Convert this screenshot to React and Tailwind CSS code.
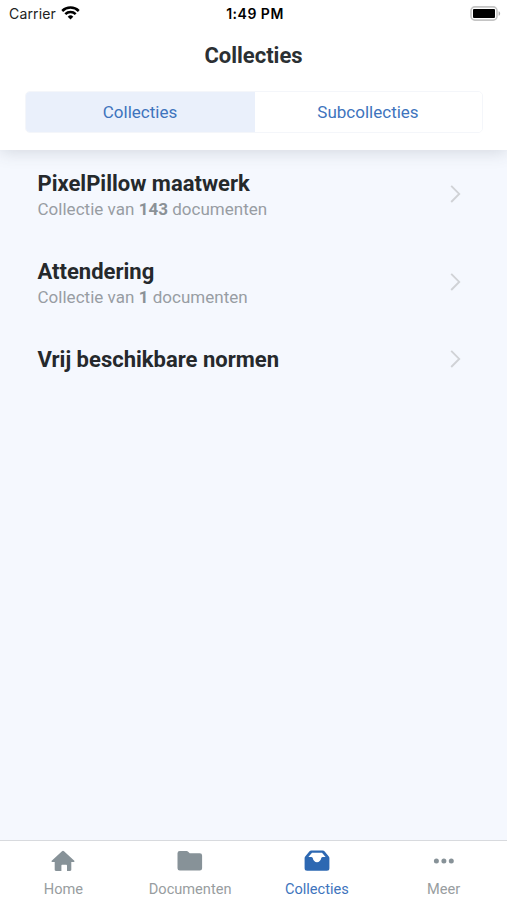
import { useState } from "react";

const HomeIcon = () => (
  <svg width="24" height="22" viewBox="0 0 24 22" fill="currentColor">
    <path d="M11 1.300a1.400 1.400 0 0 1 2 0l10.300 9.500c.5.5.2 1.200-.5 1.200H20.300v7.800c0 .7-.5 1.200-1.200 1.200h-3.100v-5.200c0-.6-.4-1-1-1h-3.600c-.6 0-1 .4-1 1V21H4.900c-.7 0-1.200-.5-1.200-1.200V12H1.200c-.7 0-1-.7-.5-1.200z" />
  </svg>
);

const FolderIcon = () => (
  <svg width="26" height="22" viewBox="0 0 26 22" fill="currentColor">
    <path d="M2.800 1h6.800c.5 0 .9.200 1.300.5l1.800 1.800h10.100a2.300 2.300 0 0 1 2.300 2.300v12.600a2.300 2.300 0 0 1-2.300 2.300h-20a2.300 2.300 0 0 1-2.300-2.300V3.300A2.300 2.300 0 0 1 2.800 1z" />
  </svg>
);

const InboxIcon = () => (
  <svg width="26" height="22" viewBox="0 0 26 22" fill="currentColor">
    <path
      fillRule="evenodd"
      d="M7.400.6h11.200c.9 0 1.600.3 2.100.9l4.100 5c.4.4.6.9.6 1.500v10.200a2.500 2.500 0 0 1-2.500 2.500H3.100a2.500 2.500 0 0 1-2.500-2.500V8c0-.6.2-1.100.6-1.500l4.100-5C5.800.9 6.500.6 7.400.6zM8 2.700 4.400 6.900h2.800c.8 0 1.300.4 1.500 1.100.5 2.500 2.200 4.300 4.300 4.300s3.800-1.800 4.300-4.300c.2-.7.700-1.100 1.500-1.100h2.800L18 2.700z"
    />
  </svg>
);

const DotsIcon = () => (
  <svg width="26" height="22" viewBox="0 0 26 22" fill="currentColor">
    <circle cx="5.400" cy="10.900" r="2.500" />
    <circle cx="12.900" cy="10.900" r="2.500" />
    <circle cx="20.300" cy="10.900" r="2.500" />
  </svg>
);

const WifiIcon = () => (
  <svg width="19" height="14" viewBox="0 0 19 14" fill="none" stroke="#000" strokeWidth="2.500">
    <path d="M1.200 5a11.800 11.800 0 0 1 16.600 0" />
    <path d="M4.300 8.200a7.400 7.400 0 0 1 10.400 0" />
    <path d="M6.700 10.700a4 4 0 0 1 5.600 0L9.500 13.600z" fill="#000" stroke="none" />
  </svg>
);

const BatteryIcon = () => (
  <svg width="31" height="15" viewBox="0 0 31 15">
    <rect x="1" y="0.900" width="26" height="13.200" rx="3.800" fill="#fff" stroke="#c4c4c4" strokeWidth="1.600" />
    <rect x="3" y="3" width="22" height="9" rx="1" fill="#000" />
    <path d="M28.600 5.200c2 .6 2 4 0 4.600z" fill="#aaa" />
  </svg>
);

const Chevron = () => (
  <svg width="12" height="20" viewBox="0 0 12 20" fill="none" stroke="#d0d2d6" strokeWidth="1.900">
    <path d="M1.200.8 9.200 8.900 1.200 17" />
  </svg>
);

const collections = [
  { name: "PixelPillow maatwerk", count: 143 },
  { name: "Attendering", count: 1 },
  { name: "Vrij beschikbare normen" },
];

const navItems = [
  { label: "Home", Icon: HomeIcon },
  { label: "Documenten", Icon: FolderIcon },
  { label: "Collecties", Icon: InboxIcon },
  { label: "Meer", Icon: DotsIcon },
];

export default function App() {
  const [tab, setTab] = useState("Collecties");
  const [page, setPage] = useState("Collecties");

  return (
    <div className="flex h-screen w-full flex-col overflow-hidden bg-[#f5f8fe] font-['Roboto',sans-serif]">
      {/* HEADER */}
      <header className="relative z-10 h-[150px] shrink-0 bg-white shadow-[0_2px_16px_rgba(60,70,85,0.18)]">
        {/* STATUS BAR */}
        <div className="grid h-[26px] grid-cols-3 items-center pl-[9px] pr-[6px] font-['Inter',sans-serif] text-[14px] text-[#222]">
          <div className="flex items-center gap-[5.5px]">
            <span className="tracking-[0.15px]">Carrier</span>
            <WifiIcon />
          </div>
          <span className="text-center font-semibold tracking-[0.5px] text-black">1:49 PM</span>
          <div className="flex justify-end">
            <BatteryIcon />
          </div>
        </div>

        <h1 className="flex h-[56px] items-center justify-center pt-[2px] text-[22px] font-bold text-[#2b3033]">
          Collecties
        </h1>

        {/* TABS */}
        <div className="ml-[25px] mr-6 mt-[9px] grid h-[42px] grid-cols-[229px_1fr] overflow-hidden rounded-[5px] border border-[#f4f6fa]">
          {["Collecties", "Subcollecties"].map((name) => (
            <button
              key={name}
              onClick={() => setTab(name)}
              className={`pr-px pt-[2px] text-[17px] text-[#3e74bd] ${tab === name ? "bg-[#eaf0fb]" : "bg-white"}`}
            >
              {name}
            </button>
          ))}
        </div>
      </header>

      {/* COLLECTIONS */}
      <main className="flex flex-1 flex-col gap-[38px] pl-[37.5px] pr-[45px] pt-5">
        {collections.map(({ name, count }) => (
          <div key={name} className="flex items-center justify-between">
            <div>
              <h2 className="text-[22px] leading-[28px] font-bold text-[#25292c]">{name}</h2>
              {count && (
                <p className="text-[17px] leading-[22px] tracking-[0.02px] text-[#989da3]">
                  Collectie van <b className="text-[#8b9196]">{count}</b> documenten
                </p>
              )}
            </div>
            <Chevron />
          </div>
        ))}
      </main>

      {/* BOTTOM NAV */}
      <nav className="grid h-[60px] shrink-0 grid-cols-4 border-t border-[#d8dade] bg-white">
        {navItems.map(({ label, Icon }) => (
          <button
            key={label}
            onClick={() => setPage(label)}
            className={`flex flex-col items-center pt-[8.5px] ${page === label ? "text-[#2d68b2]" : "text-[#879298]"}`}
          >
            <Icon />
            <span className={`mt-[7.5px] text-[14.6px] leading-[20px] ${page === label ? "text-[#3e74bd]" : "text-[#989da0]"}`}>
              {label}
            </span>
          </button>
        ))}
      </nav>
    </div>
  );
}
